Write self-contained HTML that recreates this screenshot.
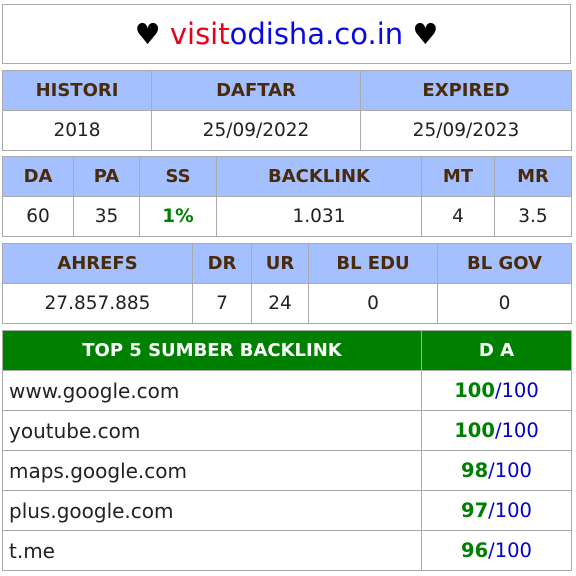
<!DOCTYPE html>
<html><head><meta charset="utf-8"><style>
*{box-sizing:border-box}
body{margin:0;width:576px;height:576px;background:#fff;font-family:"DejaVu Sans","Liberation Sans",sans-serif;position:relative;overflow:hidden}
.title{position:absolute;left:2px;top:4px;width:569px;height:60px;border:1px solid #aaa;text-align:center;font-size:29px;line-height:58px;color:#000}
table{position:absolute;left:2px;width:569px;border-collapse:collapse;table-layout:fixed}
td,th{border:1px solid #aaa;height:40px;padding:0;text-align:center;font-size:18.5px;color:#222;white-space:nowrap}
th{background:#a4c0ff;color:#4a2a0a;font-weight:bold;font-size:18px}
.g{color:#008000;font-weight:bold}
.b{color:#0000cc}
.gh th{background:#008000;color:#fff;font-size:18px}
.l{text-align:left;padding-left:6px;font-size:20px}
.v{font-size:19.5px}
</style></head><body>
<div class="title">♥ <span style="color:#e8001c">visit</span><span style="color:#0a0ae0">odisha.co.in</span> ♥</div>
<table style="top:70px"><colgroup><col style="width:149px"><col style="width:209px"><col style="width:211px"></colgroup>
<tr><th>HISTORI</th><th>DAFTAR</th><th>EXPIRED</th></tr>
<tr><td>2018</td><td>25/09/2022</td><td>25/09/2023</td></tr></table>
<table style="top:156px"><colgroup><col style="width:71px"><col style="width:66px"><col style="width:77px"><col style="width:205px"><col style="width:73px"><col style="width:77px"></colgroup>
<tr><th>DA</th><th>PA</th><th>SS</th><th>BACKLINK</th><th>MT</th><th>MR</th></tr>
<tr><td>60</td><td>35</td><td class="g">1%</td><td>1.031</td><td>4</td><td>3.5</td></tr></table>
<table style="top:243px"><colgroup><col style="width:190px"><col style="width:59px"><col style="width:57px"><col style="width:129px"><col style="width:134px"></colgroup>
<tr><th>AHREFS</th><th>DR</th><th>UR</th><th>BL EDU</th><th>BL GOV</th></tr>
<tr><td>27.857.885</td><td>7</td><td>24</td><td>0</td><td>0</td></tr></table>
<table style="top:330px"><colgroup><col style="width:419px"><col style="width:150px"></colgroup>
<tr class="gh"><th>TOP 5 SUMBER BACKLINK</th><th>D A</th></tr>
<tr><td class="l">www.google.com</td><td class="v"><span class="g">100</span><span class="b">/100</span></td></tr>
<tr><td class="l">youtube.com</td><td class="v"><span class="g">100</span><span class="b">/100</span></td></tr>
<tr><td class="l">maps.google.com</td><td class="v"><span class="g">98</span><span class="b">/100</span></td></tr>
<tr><td class="l">plus.google.com</td><td class="v"><span class="g">97</span><span class="b">/100</span></td></tr>
<tr><td class="l">t.me</td><td class="v"><span class="g">96</span><span class="b">/100</span></td></tr>
</table>
</body></html>
